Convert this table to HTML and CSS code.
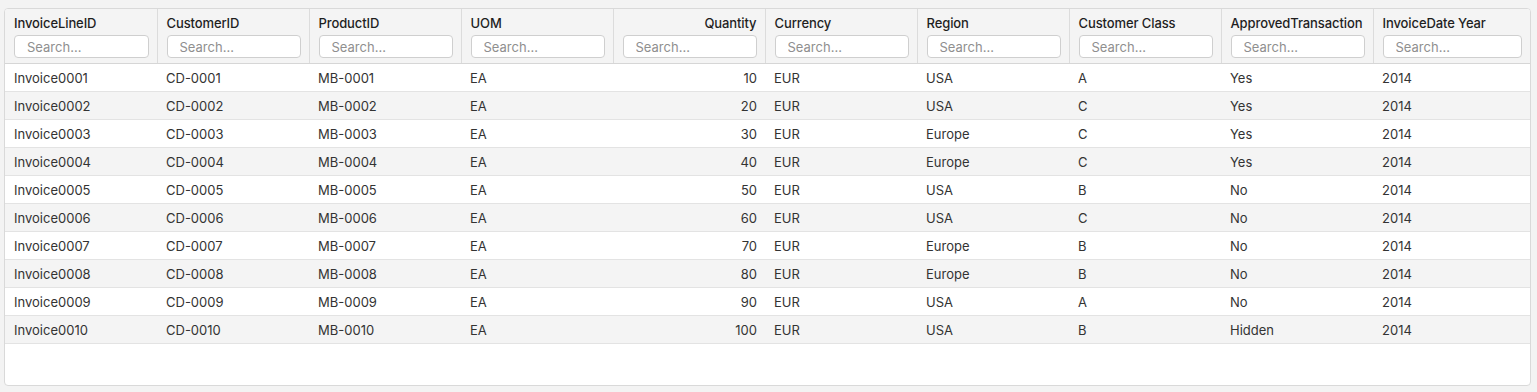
FILE: index.html
```html
<!DOCTYPE html>
<html>
<head>
<meta charset="utf-8">
<link rel="stylesheet" href="styles.css">
</head>
<body>
<div class="grid-wrap">
  <table class="grid">
    <colgroup>
      <col class="c"><col class="c"><col class="c"><col class="c"><col class="c"><col class="c"><col class="c"><col class="c"><col class="c"><col>
    </colgroup>
    <thead>
      <tr>
        <th><div class="title">InvoiceLineID</div><input class="search" placeholder="Search..."></th>
        <th><div class="title">CustomerID</div><input class="search" placeholder="Search..."></th>
        <th><div class="title">ProductID</div><input class="search" placeholder="Search..."></th>
        <th><div class="title">UOM</div><input class="search" placeholder="Search..."></th>
        <th class="num"><div class="title">Quantity</div><input class="search" placeholder="Search..."></th>
        <th><div class="title">Currency</div><input class="search" placeholder="Search..."></th>
        <th><div class="title">Region</div><input class="search" placeholder="Search..."></th>
        <th><div class="title">Customer Class</div><input class="search" placeholder="Search..."></th>
        <th><div class="title">ApprovedTransaction</div><input class="search" placeholder="Search..."></th>
        <th class="last"><div class="title">InvoiceDate Year</div><input class="search" placeholder="Search..."></th>
      </tr>
    </thead>
    <tbody>
      <tr><td>Invoice0001</td><td>CD-0001</td><td>MB-0001</td><td>EA</td><td class="num">10</td><td>EUR</td><td>USA</td><td>A</td><td>Yes</td><td>2014</td></tr>
      <tr><td>Invoice0002</td><td>CD-0002</td><td>MB-0002</td><td>EA</td><td class="num">20</td><td>EUR</td><td>USA</td><td>C</td><td>Yes</td><td>2014</td></tr>
      <tr><td>Invoice0003</td><td>CD-0003</td><td>MB-0003</td><td>EA</td><td class="num">30</td><td>EUR</td><td>Europe</td><td>C</td><td>Yes</td><td>2014</td></tr>
      <tr><td>Invoice0004</td><td>CD-0004</td><td>MB-0004</td><td>EA</td><td class="num">40</td><td>EUR</td><td>Europe</td><td>C</td><td>Yes</td><td>2014</td></tr>
      <tr><td>Invoice0005</td><td>CD-0005</td><td>MB-0005</td><td>EA</td><td class="num">50</td><td>EUR</td><td>USA</td><td>B</td><td>No</td><td>2014</td></tr>
      <tr><td>Invoice0006</td><td>CD-0006</td><td>MB-0006</td><td>EA</td><td class="num">60</td><td>EUR</td><td>USA</td><td>C</td><td>No</td><td>2014</td></tr>
      <tr><td>Invoice0007</td><td>CD-0007</td><td>MB-0007</td><td>EA</td><td class="num">70</td><td>EUR</td><td>Europe</td><td>B</td><td>No</td><td>2014</td></tr>
      <tr><td>Invoice0008</td><td>CD-0008</td><td>MB-0008</td><td>EA</td><td class="num">80</td><td>EUR</td><td>Europe</td><td>B</td><td>No</td><td>2014</td></tr>
      <tr><td>Invoice0009</td><td>CD-0009</td><td>MB-0009</td><td>EA</td><td class="num">90</td><td>EUR</td><td>USA</td><td>A</td><td>No</td><td>2014</td></tr>
      <tr><td>Invoice0010</td><td>CD-0010</td><td>MB-0010</td><td>EA</td><td class="num">100</td><td>EUR</td><td>USA</td><td>B</td><td>Hidden</td><td>2014</td></tr>
    </tbody>
  </table>
</div>
</body>
</html>
```

FILE: styles.css
```css
html, body {
  margin: 0;
  height: 100%;
}
body {
  background: #f3f3f3;
  font-family: Inter, "Noto Sans", sans-serif;
  font-size: 13px;
  color: #333;
  padding: 8px 6px 6px 4px;
  box-sizing: border-box;
}
.grid-wrap {
  height: 100%;
  box-sizing: border-box;
  background: #fff;
  border: 1px solid #d9d9d9;
  border-radius: 4px;
  overflow: hidden;
}
.grid {
  width: 100%;
  border-collapse: collapse;
  table-layout: fixed;
}
.grid col.c {
  width: 152px;
}
.grid th {
  background: #f4f4f4;
  text-align: left;
  vertical-align: top;
  font-weight: 500;
  color: #1f1f1f;
  padding: 5px 8px 5px 9px;
  border-right: 1px solid #dcdcdc;
  border-bottom: 1px solid #d6d6d6;
}
.grid th.last {
  border-right: none;
}
.grid th.num {
  text-align: right;
}
.title {
  line-height: 18px;
  height: 18px;
  margin-bottom: 3px;
  white-space: nowrap;
  letter-spacing: -0.1px;
}
.search {
  display: block;
  box-sizing: border-box;
  width: 100%;
  height: 23px;
  border: 1px solid #cfcfcf;
  border-radius: 4px;
  background: #fff;
  padding: 0 12px;
  font-family: inherit;
  font-size: 13px;
  color: #333;
  outline: none;
}
.search::placeholder {
  color: #8f8f8f;
}
.grid td {
  height: 27px;
  padding: 0 9px;
  border-bottom: 1px solid #e3e3e3;
  white-space: nowrap;
  color: #333;
}
.grid td.num {
  text-align: right;
  padding-right: 8px;
}
.grid tbody tr:nth-child(even) td {
  background: #f4f4f4;
}
```
